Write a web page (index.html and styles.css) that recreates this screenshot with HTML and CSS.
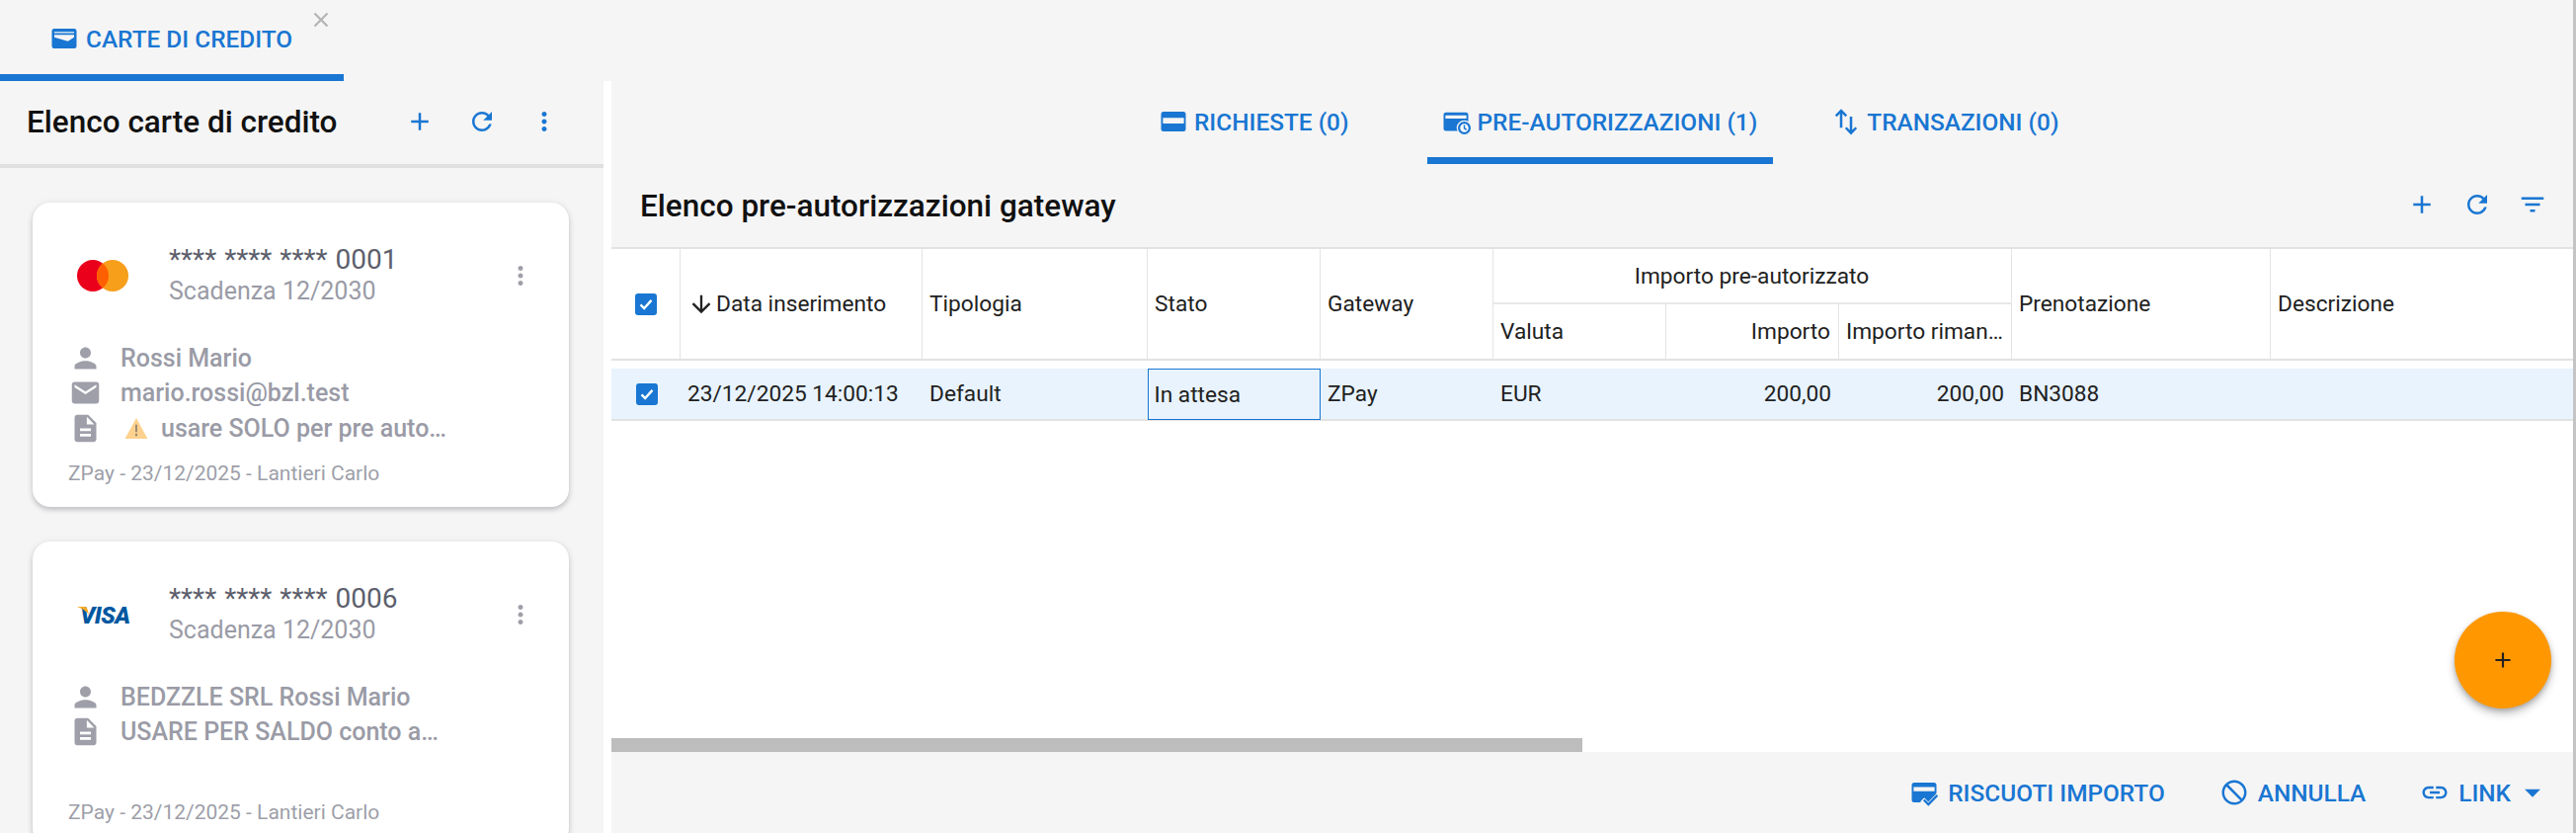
FILE: index.html
```html
<!DOCTYPE html>
<html lang="it">
<head>
<meta charset="utf-8">
<title>Carte di credito</title>
<link rel="stylesheet" href="styles.css">
</head>
<body>
<div class="app">
  <header class="tabbar">
    <div class="page-tab">
      <svg class="ico" viewBox="0 0 24 24"><path fill-rule="evenodd" d="M4 4h16a2 2 0 0 1 2 2v12a2 2 0 0 1-2 2H4a2 2 0 0 1-2-2V6a2 2 0 0 1 2-2zM4 6.600v1h16v-1zM4 9v2l11 3.200 5-3.200V9z"/></svg>
      <span>CARTE DI CREDITO</span>
      <svg class="close" viewBox="0 0 16 16"><path d="M1.500 1.500l13 13M14.500 1.500l-13 13"/></svg>
    </div>
  </header>
  <div class="workspace">
    <aside class="side">
      <div class="side-head">
        <h2 class="title">Elenco carte di credito</h2>
        <div class="tools side-tools">
          <svg class="ico" viewBox="0 0 24 24"><path d="M19 13h-6v6h-2v-6H5v-2h6V5h2v6h6v2z"/></svg>
          <svg class="ico" viewBox="0 0 24 24"><path d="M17.650 6.350C16.200 4.900 14.210 4 12 4c-4.420 0-7.990 3.580-7.990 8s3.570 8 7.990 8c3.730 0 6.840-2.550 7.730-6h-2.080c-.82 2.330-3.040 4-5.650 4-3.310 0-6-2.690-6-6s2.690-6 6-6c1.660 0 3.140.69 4.220 1.780L13 11h7V4l-2.350 2.350z"/></svg>
          <svg class="ico" viewBox="0 0 24 24"><path d="M12 8c1.100 0 2-.9 2-2s-.9-2-2-2-2 .9-2 2 .9 2 2 2zm0 2c-1.100 0-2 .9-2 2s.9 2 2 2 2-.9 2-2-.9-2-2-2zm0 6c-1.100 0-2 .9-2 2s.9 2 2 2 2-.9 2-2-.9-2-2-2z"/></svg>
        </div>
      </div>
      <div class="cards">
        <article class="card">
          <div class="card-head">
            <svg class="brand" viewBox="0 0 52 32"><circle cx="16" cy="16" r="16" fill="#eb001b"/><circle cx="36" cy="16" r="16" fill="#f79e1b"/><path d="M26 3.500a16 16 0 0 1 0 25 16 16 0 0 1 0-25z" fill="#ff5f00"/></svg>
            <div class="card-id">
              <div class="card-num">**** **** **** 0001</div>
              <div class="card-exp">Scadenza 12/2030</div>
            </div>
            <svg class="ico card-more" viewBox="0 0 24 24"><path d="M12 8c1.100 0 2-.9 2-2s-.9-2-2-2-2 .9-2 2 .9 2 2 2zm0 2c-1.100 0-2 .9-2 2s.9 2 2 2 2-.9 2-2-.9-2-2-2zm0 6c-1.100 0-2 .9-2 2s.9 2 2 2 2-.9 2-2-.9-2-2-2z"/></svg>
          </div>
          <div class="info">
            <div class="info-row">
              <svg class="info-ico" viewBox="0 0 24 24"><path d="M12 12c2.210 0 4-1.790 4-4s-1.790-4-4-4-4 1.790-4 4 1.790 4 4 4zm0 2c-2.670 0-8 1.340-8 4v2h16v-2c0-2.660-5.330-4-8-4z"/></svg>
              <span class="info-text">Rossi Mario</span>
            </div>
            <div class="info-row">
              <svg class="info-ico" viewBox="0 0 24 24"><path d="M20 4H4c-1.100 0-1.990.9-1.990 2L2 18c0 1.100.9 2 2 2h16c1.100 0 2-.9 2-2V6c0-1.100-.9-2-2-2zm0 4l-8 5-8-5V6l8 5 8-5v2z"/></svg>
              <span class="info-text">mario.rossi@bzl.test</span>
            </div>
            <div class="info-row">
              <svg class="info-ico" viewBox="0 0 24 24"><path d="M14 2H6c-1.100 0-1.990.9-1.990 2L4 20c0 1.100.89 2 1.990 2H18c1.100 0 2-.9 2-2V8l-6-6zm2 16H8v-2h8v2zm0-4H8v-2h8v2zm-3-5V3.500L18.500 9H13z"/></svg>
              <svg class="warn" viewBox="0 0 24 22"><path d="M12 0L24 22H0z" fill="#fdd28e"/><path d="M12 7v8M12 16.600v2.400" stroke="#978672" stroke-width="2" fill="none"/></svg>
              <span class="info-text">usare SOLO per pre autorizzazioni</span>
            </div>
          </div>
          <div class="card-foot">ZPay - 23/12/2025 - Lantieri Carlo</div>
        </article>
        <article class="card">
          <div class="card-head">
            <div class="visa"><span>VISA</span><svg class="visa-tick" viewBox="0 0 12 8"><path d="M0 0h7.500c1.500 0 2.500.8 3 2.500L12 8C9.500 4.500 5 1.800 0 0z" fill="#f7a823"/></svg></div>
            <div class="card-id">
              <div class="card-num">**** **** **** 0006</div>
              <div class="card-exp">Scadenza 12/2030</div>
            </div>
            <svg class="ico card-more" viewBox="0 0 24 24"><path d="M12 8c1.100 0 2-.9 2-2s-.9-2-2-2-2 .9-2 2 .9 2 2 2zm0 2c-1.100 0-2 .9-2 2s.9 2 2 2 2-.9 2-2-.9-2-2-2zm0 6c-1.100 0-2 .9-2 2s.9 2 2 2 2-.9 2-2-.9-2-2-2z"/></svg>
          </div>
          <div class="info">
            <div class="info-row">
              <svg class="info-ico" viewBox="0 0 24 24"><path d="M12 12c2.210 0 4-1.790 4-4s-1.790-4-4-4-4 1.790-4 4 1.790 4 4 4zm0 2c-2.670 0-8 1.340-8 4v2h16v-2c0-2.660-5.330-4-8-4z"/></svg>
              <span class="info-text">BEDZZLE SRL Rossi Mario</span>
            </div>
            <div class="info-row">
              <svg class="info-ico" viewBox="0 0 24 24"><path d="M14 2H6c-1.100 0-1.990.9-1.990 2L4 20c0 1.100.89 2 1.990 2H18c1.100 0 2-.9 2-2V8l-6-6zm2 16H8v-2h8v2zm0-4H8v-2h8v2zm-3-5V3.500L18.500 9H13z"/></svg>
              <span class="info-text">USARE PER SALDO conto agenzia</span>
            </div>
          </div>
          <div class="card-foot">ZPay - 23/12/2025 - Lantieri Carlo</div>
        </article>
      </div>
    </aside>
    <main class="main">
      <nav class="subtabs">
        <div class="subtab first">
          <svg class="ico" viewBox="0 0 24 24"><path fill-rule="evenodd" d="M4 4h16a2 2 0 0 1 2 2v12a2 2 0 0 1-2 2H4a2 2 0 0 1-2-2V6a2 2 0 0 1 2-2zM3.500 9v4.500h17V9z"/></svg>
          <span>RICHIESTE (0)</span>
        </div>
        <div class="subtab active">
          <svg class="ico" viewBox="0 0 24 24"><path fill-rule="evenodd" d="M4 4.500h16a2 2 0 0 1 2 2v11a2 2 0 0 1-2 2H4a2 2 0 0 1-2-2v-11a2 2 0 0 1 2-2zM3.500 7v2.500h17V7z"/><circle cx="18.800" cy="17.200" r="6.200" fill="#f5f5f5"/><circle cx="18.800" cy="17.200" r="4.300" fill="#fff" stroke="#1976d2" stroke-width="1.800"/><path d="M18.800 14.800v2.700l1.800 1.100" fill="none" stroke="#1976d2" stroke-width="1.200"/></svg>
          <span>PRE-AUTORIZZAZIONI (1)</span>
        </div>
        <div class="subtab">
          <svg class="ico stroke" viewBox="0 0 24 24"><path d="M8 17V3.500M3.800 7.500L8 3.200l4.200 4.300M16 8v13M11.800 17L16 21.300l4.200-4.300"/></svg>
          <span>TRANSAZIONI (0)</span>
        </div>
      </nav>
      <div class="main-head">
        <h2 class="title">Elenco pre-autorizzazioni gateway</h2>
        <div class="tools main-tools">
          <svg class="ico" viewBox="0 0 24 24"><path d="M19 13h-6v6h-2v-6H5v-2h6V5h2v6h6v2z"/></svg>
          <svg class="ico" viewBox="0 0 24 24"><path d="M17.650 6.350C16.200 4.900 14.210 4 12 4c-4.420 0-7.990 3.580-7.990 8s3.570 8 7.990 8c3.730 0 6.840-2.550 7.730-6h-2.080c-.82 2.330-3.040 4-5.650 4-3.310 0-6-2.690-6-6s2.690-6 6-6c1.660 0 3.140.69 4.220 1.780L13 11h7V4l-2.350 2.350z"/></svg>
          <svg class="ico" viewBox="0 0 24 24"><path d="M10 18h4v-2h-4v2zM3 6v2h18V6H3zm3 7h12v-2H6v2z"/></svg>
        </div>
      </div>
      <section class="grid-area">
        <div class="grid-head">
          <div class="th tall center"><span class="check"><svg viewBox="0 0 24 24"><path d="M6 12.500l4 4 8-9"/></svg></span></div>
          <div class="th tall"><svg class="sort" viewBox="0 0 24 24"><path d="M20 12l-1.410-1.410L13 16.170V4h-2v12.170l-5.580-5.590L4 12l8 8 8-8z"/></svg>Data inserimento</div>
          <div class="th tall">Tipologia</div>
          <div class="th tall">Stato</div>
          <div class="th tall">Gateway</div>
          <div class="th group">Importo pre-autorizzato</div>
          <div class="th tall">Prenotazione</div>
          <div class="th tall last">Descrizione</div>
          <div class="th">Valuta</div>
          <div class="th right">Importo</div>
          <div class="th wide"><span class="clip">Importo rimanente</span></div>
        </div>
        <div class="grid-row">
          <div class="td center"><span class="check"><svg viewBox="0 0 24 24"><path d="M6 12.500l4 4 8-9"/></svg></span></div>
          <div class="td">23/12/2025 14:00:13</div>
          <div class="td">Default</div>
          <div class="td focus">In attesa</div>
          <div class="td">ZPay</div>
          <div class="td">EUR</div>
          <div class="td right">200,00</div>
          <div class="td right">200,00</div>
          <div class="td">BN3088</div>
          <div class="td"></div>
        </div>
        <button class="fab" type="button" aria-label="Aggiungi"><svg viewBox="0 0 24 24"><path d="M19 13h-6v6h-2v-6H5v-2h6V5h2v6h6v2z"/></svg></button>
      </section>
      <div class="hscroll"><div class="thumb"></div></div>
      <footer class="actions">
        <div class="action">
          <svg class="ico" viewBox="0 0 24 24"><path fill-rule="evenodd" d="M4 4h16a2 2 0 0 1 2 2v12a2 2 0 0 1-2 2H4a2 2 0 0 1-2-2V6a2 2 0 0 1 2-2zM3.500 7.500V11h17V7.500z"/><path d="M10.500 17.800l5 5 8.500-8.800" fill="none" stroke="#f5f5f5" stroke-width="4.500"/><path d="M11.800 18l3.700 3.700 7.200-7.400" fill="none" stroke="#1976d2" stroke-width="1.800"/></svg>
          <span>RISCUOTI IMPORTO</span>
        </div>
        <div class="action">
          <svg class="ico" viewBox="0 0 24 24"><path d="M12 2C6.480 2 2 6.480 2 12s4.480 10 10 10 10-4.480 10-10S17.520 2 12 2zM4 12c0-4.420 3.580-8 8-8 1.850 0 3.550.63 4.900 1.690L5.690 16.900C4.630 15.550 4 13.850 4 12zm8 8c-1.850 0-3.550-.63-4.900-1.690L18.310 7.100C19.370 8.450 20 10.150 20 12c0 4.420-3.580 8-8 8z" transform="rotate(90 12 12)"/></svg>
          <span>ANNULLA</span>
        </div>
        <div class="action">
          <svg class="ico" viewBox="0 0 24 24"><path d="M3.900 12c0-1.710 1.390-3.100 3.100-3.100h4V7H7c-2.760 0-5 2.240-5 5s2.240 5 5 5h4v-1.900H7c-1.710 0-3.100-1.390-3.100-3.100zM8 13h8v-2H8v2zm9-6h-4v1.900h4c1.710 0 3.100 1.390 3.100 3.100s-1.390 3.100-3.100 3.100h-4V17h4c2.760 0 5-2.240 5-5s-2.240-5-5-5z"/></svg>
          <span>LINK</span>
          <svg class="caret" viewBox="0 0 24 24"><path d="M7 10l5 5 5-5z"/></svg>
        </div>
      </footer>
    </main>
  </div>
</div>
</body>
</html>
```

FILE: styles.css
```css
* { box-sizing: border-box; }
html, body { margin: 0; padding: 0; }
body {
  width: 2608px;
  height: 843px;
  overflow: hidden;
  background: #f5f5f5;
  font-family: Roboto, "Liberation Sans", sans-serif;
  font-size: 22.7px;
  color: #212121;
}
.app {
  width: 2608px;
  height: 843px;
  display: flex;
  flex-direction: column;
  border-right: 3px solid #c4c4c4;
}
.ico { width: 30px; height: 30px; fill: #1976d2; flex: none; display: block; overflow: visible; }
.ico.stroke { fill: none; stroke: #1976d2; stroke-width: 2; }

/* top tab */
.tabbar { height: 82px; flex: none; }
.page-tab {
  position: relative;
  width: 348px;
  height: 82px;
  padding: 3px 0 0 50px;
  border-bottom: 7px solid #1976d2;
  display: flex;
  align-items: center;
  gap: 7px;
  color: #1976d2;
  font-size: 24.4px;
  font-weight: 500;
}
.close {
  position: absolute;
  left: 317px;
  top: 12px;
  width: 16px;
  height: 16px;
  stroke: #b4b4b4;
  stroke-width: 2.2;
  fill: none;
}

/* layout */
.workspace { flex: 1; min-height: 0; display: flex; gap: 8px; background: #fff; }
.side { width: 611px; flex: none; background: #f5f5f5; overflow: hidden; }
.main {
  flex: 1;
  min-width: 0;
  display: flex;
  flex-direction: column;
  background: #f5f5f5;
  position: relative;
}
.title { margin: 0; font-size: 31.5px; font-weight: 500; color: #111; }
.tools { display: flex; }
.side-head {
  height: 88px;
  padding: 0 45px 2px 27px;
  border-bottom: 4px solid #e0e0e0;
  display: flex;
  align-items: center;
  justify-content: space-between;
}
.side-tools { gap: 33px; }

/* cards */
.cards { padding: 35px 35px 0 33px; display: flex; flex-direction: column; gap: 35px; }
.card {
  height: 308px;
  flex: none;
  padding: 42px 36px 0;
  background: #fff;
  border-radius: 18px;
  box-shadow: 0 3px 5px rgba(80, 80, 95, .28), 0 0 8px rgba(0, 0, 0, .06);
}
.card-head { height: 64px; padding-left: 9px; display: flex; align-items: center; gap: 41px; }
.brand { width: 52px; height: 32px; flex: none; }
.card-id { flex: 1; min-width: 0; line-height: 32px; }
.card-num { color: #5d5f6d; font-size: 28px; word-spacing: 1px; }
.card-exp { color: #9a9ba6; font-size: 25px; }
.card-more { fill: #9e9fa9; margin-right: -2px; }
.visa {
  position: relative;
  width: 52px;
  flex: none;
  margin-top: 2px;
  padding-left: 3px;
  color: #00579f;
  font: italic 900 24px/24px Roboto, sans-serif;
  letter-spacing: -.6px;
}
.visa-tick { position: absolute; left: 0; top: 3px; width: 12px; height: 8px; }
.info { height: 106px; margin-top: 33.5px; }
.info-row { height: 35.5px; display: flex; align-items: center; padding-left: 1px; }
.info-ico { width: 33px; height: 33px; flex: none; fill: #9e9fa9; margin-right: 19px; }
.warn { width: 24px; height: 21px; flex: none; margin: 0 13px 0 4px; }
.info-text {
  flex: none;
  max-width: 330px;
  white-space: nowrap;
  overflow: hidden;
  text-overflow: ellipsis;
  color: #9a9ba6;
  font-size: 25px;
  font-weight: 500;
}
.warn + .info-text { max-width: 293px; }
.card-foot { height: 28px; margin-top: 14.5px; line-height: 28px; font-size: 21px; color: #9e9fa9; }

/* sub tabs */
.subtabs { height: 84px; flex: none; padding-left: 540px; display: flex; gap: 45px; }
.subtab {
  height: 84px;
  padding: 5px 16px 0 13.5px;
  border-bottom: 7px solid transparent;
  display: flex;
  align-items: center;
  gap: 6.5px;
  color: #1976d2;
  font-size: 24.4px;
  font-weight: 500;
}
.subtab.first { margin-right: 19px; }
.subtab.active { border-bottom-color: #1976d2; }
.main-head {
  height: 84px;
  flex: none;
  padding: 0 26px 0 29px;
  display: flex;
  align-items: center;
  justify-content: space-between;
}
.main-tools { gap: 26px; margin-top: -2px; }

/* grid */
.grid-area { flex: 1; min-height: 0; position: relative; background: #fff; border-top: 2px solid #e2e2e2; }
.grid-head, .grid-row {
  display: grid;
  grid-template-columns: 70px 245px 228px 175px 175px 175px 175px 175px 262px 1fr;
}
.grid-head { grid-template-rows: 56px 55px; border-bottom: 2px solid #e2e2e2; }
.th {
  display: flex;
  align-items: center;
  padding: 0 8px 0 7px;
  min-width: 0;
  border-right: 1px solid #e4e4e4;
  white-space: nowrap;
}
.th.tall { grid-row: span 2; }
.th.last { border-right: 0; }
.th.wide { padding-right: 3px; }
.th.group { grid-column: span 3; justify-content: center; border-bottom: 2px solid #e8e8e8; }
.center { justify-content: center; }
.right { justify-content: flex-end; }
.clip { overflow: hidden; text-overflow: ellipsis; }
.sort { width: 28px; height: 28px; flex: none; fill: #212121; margin-right: 1px; }
.grid-row {
  height: 53px;
  margin-top: 8px;
  background: #e8f3fd;
  border-bottom: 2px solid #e2e2e2;
}
.td { display: flex; align-items: center; padding: 0 8px 0 7px; white-space: nowrap; min-width: 0; }
.td.focus { border: 1.5px solid #1976d2; padding-left: 5.5px; margin-bottom: -1px; background: #e8f3fd; }
.check {
  width: 22px;
  height: 22px;
  margin-left: 2px;
  background: #1976d2;
  border-radius: 3px;
  display: block;
}
.check svg { display: block; width: 22px; height: 22px; fill: none; stroke: #fff; stroke-width: 2.6; }
.fab {
  position: absolute;
  right: 22px;
  bottom: 30px;
  width: 98px;
  height: 98px;
  padding: 0;
  border: 0;
  border-radius: 50%;
  background: #ff9800;
  box-shadow: 0 5px 8px rgba(0, 0, 0, .25), 0 2px 4px rgba(0, 0, 0, .15);
  display: flex;
  align-items: center;
  justify-content: center;
}
.fab svg { width: 26px; height: 26px; fill: #212121; }
.hscroll { height: 14px; flex: none; background: #fff; }
.thumb { width: 983px; height: 14px; background: #bdbdbd; }
.actions {
  height: 82px;
  flex: none;
  padding: 0 22px 0 0;
  display: flex;
  align-items: center;
  justify-content: flex-end;
  gap: 55px;
  font-size: 24.4px;
}
.action { display: flex; align-items: center; gap: 9px; color: #1976d2; font-weight: 500; }
.caret { width: 38px; height: 38px; flex: none; fill: #1976d2; margin-left: -6px; }
```
